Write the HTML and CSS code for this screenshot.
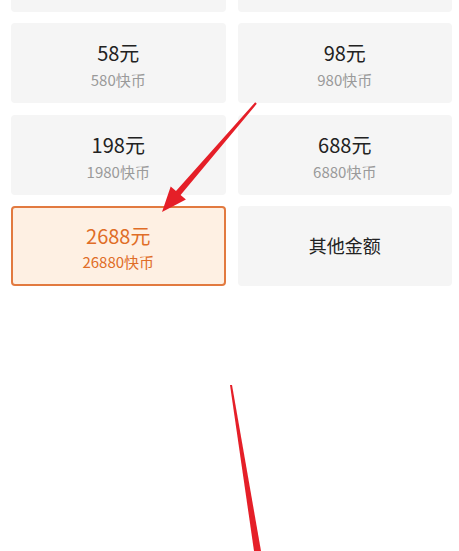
FILE: index.html
```html
<!DOCTYPE html>
<html>
<head>
<meta charset="utf-8">
<link rel="stylesheet" href="styles.css">
</head>
<body>
<div class="page">
  <div class="grid">
    <div class="card"></div>
    <div class="card"></div>
    <div class="card"><div class="main">58元</div><div class="sub">580快币</div></div>
    <div class="card"><div class="main">98元</div><div class="sub">980快币</div></div>
    <div class="card"><div class="main">198元</div><div class="sub">1980快币</div></div>
    <div class="card"><div class="main">688元</div><div class="sub">6880快币</div></div>
    <div class="card selected"><div class="main">2688元</div><div class="sub">26880快币</div></div>
    <div class="card other"><div class="label">其他金额</div></div>
  </div>
  <svg class="annot" width="459" height="551" viewBox="0 0 459 551">
    <polygon fill="#e51f28" points="256.8,103.7 255.2,102.3 176.0,191.1 170.7,186.6 162,212 185.9,199.6 180.6,195.1"/>
    <polygon fill="#e51f28" points="230,385 232,385 261,551 254,551"/>
  </svg>
</div>
</body>
</html>
```
FILE: styles.css
```css
html, body {
  margin: 0;
  padding: 0;
  background: #ffffff;
  overflow: hidden;
}
body {
  width: 459px;
  height: 551px;
  font-family: "Noto Sans CJK SC", "Noto Sans", sans-serif;
}
.page {
  position: relative;
  width: 459px;
  height: 551px;
  overflow: hidden;
}
.grid {
  display: grid;
  grid-template-columns: 1fr 1fr;
  grid-auto-rows: 80px;
  column-gap: 12px;
  row-gap: 11.5px;
  padding: 0 7px 0 11px;
  margin-top: -68.5px;
}
.card {
  background: #f5f5f5;
  border-radius: 4px;
  display: flex;
  flex-direction: column;
  align-items: center;
  box-sizing: border-box;
  padding-top: 16px;
}
.main {
  font-size: 20px;
  line-height: 28px;
  color: #222222;
}
.sub {
  font-size: 15px;
  line-height: 20px;
  margin-top: 3px;
  color: #9a9a9a;
}
.selected {
  background: #fef0e3;
  border: 2px solid #e27a40;
  padding-top: 14px;
}
.selected .main {
  color: #e06d27;
}
.selected .sub {
  color: #e06d27;
  margin-top: 2px;
}
.other {
  justify-content: center;
  padding-top: 0;
}
.label {
  font-size: 18px;
  color: #222222;
  margin-top: -2px;
}
.annot {
  position: absolute;
  left: 0;
  top: 0;
  pointer-events: none;
}
```
